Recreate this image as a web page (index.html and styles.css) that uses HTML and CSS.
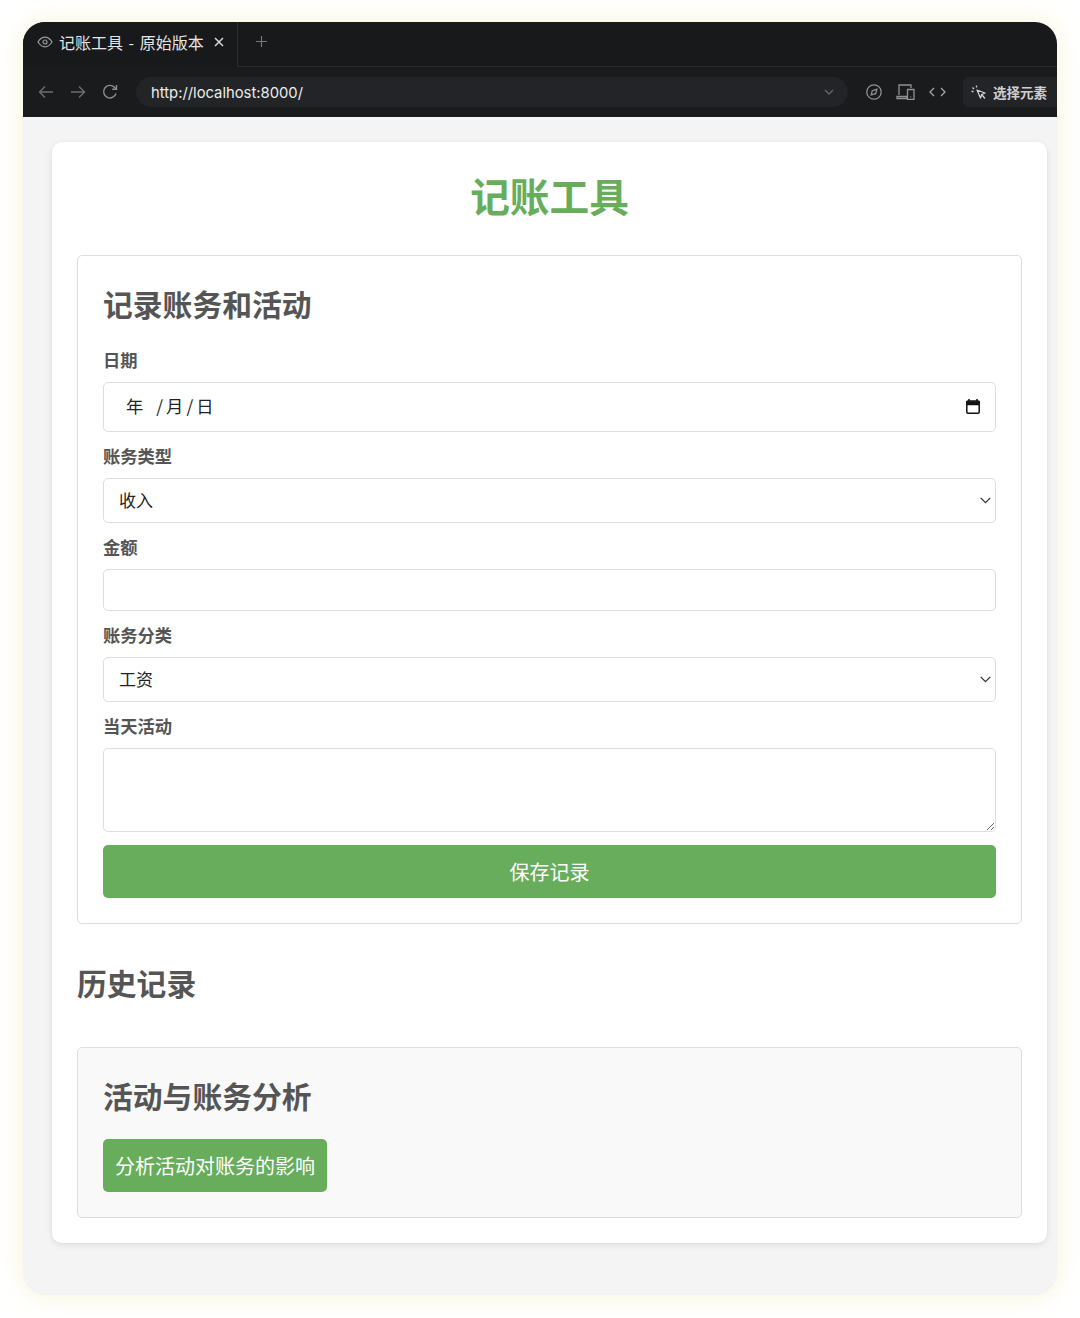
FILE: index.html
```html
<!DOCTYPE html>
<html lang="zh-CN">
<head>
	<meta charset="UTF-8">
	<meta name="viewport" content="width=device-width, initial-scale=1.0">
	<title>记账工具</title>
	<link rel="stylesheet" href="styles.css">
</head>
<body>
<div class="window">
	<!-- 标签栏 -->
	<div class="tab-bar">
		<div class="tab">
			<svg class="tab-eye" width="16" height="12" viewBox="0 0 16 12" fill="none" stroke="#9a9b9d" stroke-width="1.2"><path d="M1 6c2-3.2 4.2-4.8 7-4.8S13 2.800 15 6c-2 3.200-4.200 4.800-7 4.800S3 9.200 1 6z"/><circle cx="8" cy="6" r="2"/></svg>
			<span class="tab-title">记账工具 - 原始版本</span>
			<svg class="tab-close" width="10" height="10" viewBox="0 0 10 10" stroke="#d8d8d8" stroke-width="1.5"><path d="M1 1l8 8M9 1l-8 8"/></svg>
		</div>
		<svg class="tab-new" width="11" height="11" viewBox="0 0 11 11" stroke="#77787a" stroke-width="1.200"><path d="M5.500 0v11M0 5.500h11"/></svg>
	</div>

	<!-- 地址栏 -->
	<div class="toolbar">
		<div class="nav-icons">
			<svg width="16" height="14" viewBox="0 0 16 14" fill="none" stroke="#6c6d6f" stroke-width="1.400"><path d="M15 7H1.500M7 1.500L1.500 7 7 12.500"/></svg>
			<svg width="16" height="14" viewBox="0 0 16 14" fill="none" stroke="#6c6d6f" stroke-width="1.400"><path d="M1 7h13.500M9 1.500L14.500 7 9 12.500"/></svg>
			<svg width="16" height="16" viewBox="0 0 16 16" fill="none" stroke="#8c8d8f" stroke-width="1.400"><path d="M14 9.500A6.300 6.300 0 1 1 12.400 3.200L14.200 5"/><path d="M14.500 1v4.300h-4.300"/></svg>
		</div>
		<div class="url-bar">
			<span class="url-text">http://localhost:8000/</span>
			<svg width="10" height="6" viewBox="0 0 10 6" fill="none" stroke="#66676a" stroke-width="1.300"><path d="M1 1l4 4 4-4"/></svg>
		</div>
		<div class="tool-icons">
			<svg width="16" height="16" viewBox="0 0 16 16" fill="none" stroke="#909193" stroke-width="1.300"><circle cx="8" cy="8" r="7.200"/><path d="M5.200 10.800l1.100-4.100 4.500-1.500-1.100 4.400z"/></svg>
			<svg width="19" height="16" viewBox="0 0 19 16" fill="none" stroke="#909193" stroke-width="1.300"><path d="M3 11V1h12v3M1 12.500h10v2H1z"/><path d="M11.500 5.500h6.500v9.800h-6.500z"/><path d="M14.700 12.500v.8"/></svg>
			<svg width="17" height="10" viewBox="0 0 17 10" fill="none" stroke="#a5a6a8" stroke-width="1.300"><path d="M5 1L1 5l4 4M12 1l4 4-4 4"/></svg>
		</div>
		<div class="pick-btn">
			<svg width="17" height="16" viewBox="0 0 17 16" fill="none" stroke="#d0d0d2" stroke-width="1.300"><path d="M7 6l8 3-3.200 1.300L10.500 14z" fill="#1c1d1f" stroke-linejoin="round"/><path d="M12 11l3 3.500M4 5L2.500 3.500M6.500 3.500V1.500M3.500 7.500h-2"/></svg>
			<span>选择元素</span>
		</div>
	</div>

	<div class="viewport">
		<div class="card">
			<h1>记账工具</h1>

			<!-- 记录表单 -->
			<form class="panel">
				<h2>记录账务和活动</h2>
				<div class="field">
					<label>日期</label>
					<div class="date-input">
						<span class="date-text">年<span class="date-sep">/</span>月<span class="date-sep-b">/</span>日</span>
						<svg class="date-icon" width="14" height="15" viewBox="0 0 14 15" fill="none"><rect x="0.800" y="2" width="12.400" height="12.200" rx="1.200" stroke="#111" stroke-width="1.500"/><path d="M0.800 3h12.400v2.400H0.800zM3 0v2M11 0v2" stroke="#111" stroke-width="1.500" fill="#111"/></svg>
					</div>
				</div>
				<div class="field">
					<label for="type">账务类型</label>
					<select id="type" class="control select-control"><option>收入</option><option>支出</option></select>
				</div>
				<div class="field">
					<label for="amount">金额</label>
					<input id="amount" class="control amount-control" type="number">
				</div>
				<div class="field">
					<label for="category">账务分类</label>
					<select id="category" class="control select-control"><option>工资</option><option>其他</option></select>
				</div>
				<div class="field">
					<label for="activity">当天活动</label>
					<textarea id="activity" class="control activity-control"></textarea>
				</div>
				<button type="button" class="btn btn-full">保存记录</button>
			</form>

			<h2 class="history-title">历史记录</h2>

			<div class="panel panel-grey">
				<h2>活动与账务分析</h2>
				<button type="button" class="btn">分析活动对账务的影响</button>
			</div>
		</div>
	</div>
</div>
</body>
</html>
```

FILE: styles.css
```css
* {
	box-sizing: border-box;
}
body {
	margin: 0;
	padding: 22px 23px 23px;
	background-color: #fff;
	font-family: "Noto Sans CJK SC", "Noto Sans", sans-serif;
}
.window {
	height: 1273px;
	border-radius: 22px;
	background-color: #f4f4f5;
	box-shadow: 0 0 26px rgba(245, 240, 200, 0.75);
	overflow: hidden;
}

/* browser chrome */
.tab-bar {
	display: flex;
	align-items: center;
	height: 45px;
	background-color: #18191b;
	border-bottom: 1px solid #2b2c2e;
}
.tab {
	display: flex;
	align-items: center;
	width: 215px;
	height: 45px;
	padding: 0 0 5px 14px;
	border-right: 1px solid #2b2c2e;
	background-color: #18191b;
	margin-bottom: -1px;
}
.tab-title {
	margin: 0 0 1px 6px;
	font-size: 16px;
	word-spacing: 2px;
	color: #e6e6e6;
	white-space: nowrap;
}
.tab-close {
	margin-left: 10px;
}
.tab-new {
	margin: 0 0 5px 18px;
}
.toolbar {
	display: flex;
	align-items: center;
	height: 50px;
	background-color: #1a1b1d;
}
.nav-icons {
	display: flex;
	align-items: center;
	gap: 16px;
	padding-left: 15px;
}
.url-bar {
	display: flex;
	flex-shrink: 0;
	align-items: center;
	justify-content: space-between;
	width: 712px;
	height: 30px;
	margin-left: 18px;
	padding: 0 14px 0 15px;
	border-radius: 15px;
	background-color: #232427;
}
.url-text {
	padding-top: 1px;
	font-family: Inter, sans-serif;
	font-size: 14.800px;
	color: #ececec;
}
.tool-icons {
	display: flex;
	flex-shrink: 0;
	align-items: center;
	gap: 14px;
	margin-left: 18px;
}
.pick-btn {
	display: flex;
	flex: 1;
	align-items: center;
	gap: 6px;
	height: 30px;
	margin-left: 17px;
	padding-left: 7px;
	border-radius: 6px 0 0 6px;
	background-color: #232427;
	font-size: 13.500px;
	font-weight: 700;
	color: #cfcfd1;
	white-space: nowrap;
}

/* page */
.viewport {
	padding: 25px 10px 0 29px;
}
.card {
	height: 1101px;
	padding: 25px;
	border-radius: 10px;
	background-color: #fff;
	box-shadow: 0 2px 6px rgba(0, 0, 0, 0.1);
}
h1 {
	margin: 0 0 26px;
	padding-bottom: 6px;
	font-size: 39.700px;
	line-height: 56px;
	font-weight: 700;
	text-align: center;
	color: #67ad5b;
}
h2 {
	margin: 0;
	padding-bottom: 4px;
	font-size: 29.800px;
	line-height: 44px;
	font-weight: 700;
	color: #555;
}
.panel {
	padding: 25px;
	border: 1px solid #ddd;
	border-radius: 5px;
	background-color: #fff;
}
.panel-grey {
	padding-bottom: 25px;
	background-color: #f9f9f9;
}
.history-title {
	margin: 36px 0 39px;
}
.field {
	margin-top: 20px;
}
.field + .field {
	margin-top: 13px;
}
label {
	display: block;
	margin-bottom: 9px;
	padding-bottom: 2px;
	font-size: 17.300px;
	line-height: 22px;
	font-weight: 700;
	color: #555;
}
.control {
	display: block;
	width: 100%;
	border: 1px solid #ddd;
	border-radius: 5px;
	background-color: #fff;
	font-family: inherit;
	font-size: 17px;
	color: #222;
}
.select-control {
	height: 45px;
	padding: 0 20px 3px 15px;
	appearance: none;
	background-image: url("data:image/svg+xml,%3Csvg xmlns='http://www.w3.org/2000/svg' width='11' height='7' viewBox='0 0 11 7' fill='none' stroke='%23333' stroke-width='1.300'%3E%3Cpath d='M.7.900l4.800 4.800L10.300.900'/%3E%3C/svg%3E");
	background-repeat: no-repeat;
	background-position: right 4px center;
}
.amount-control {
	height: 42px;
}
.activity-control {
	height: 84px;
}
.date-input {
	display: flex;
	align-items: center;
	justify-content: space-between;
	height: 50px;
	padding: 0 15px 0 22px;
	border: 1px solid #ddd;
	border-radius: 5px;
	font-size: 17.300px;
	color: #222;
}
.date-text {
	padding-bottom: 4px;
}
.date-icon {
	margin-bottom: 2px;
}
.date-sep {
	margin: 0 3px 0 13px;
}
.date-sep-b {
	margin: 0 3px;
}
.btn {
	display: block;
	height: 53px;
	padding: 0 12px;
	border: none;
	border-radius: 5px;
	background-color: #67ad5b;
	font-family: inherit;
	font-size: 20px;
	color: #fff;
}
.btn-full {
	width: 100%;
	margin-top: 13px;
}
.panel-grey .btn {
	margin-top: 18px;
}
```
